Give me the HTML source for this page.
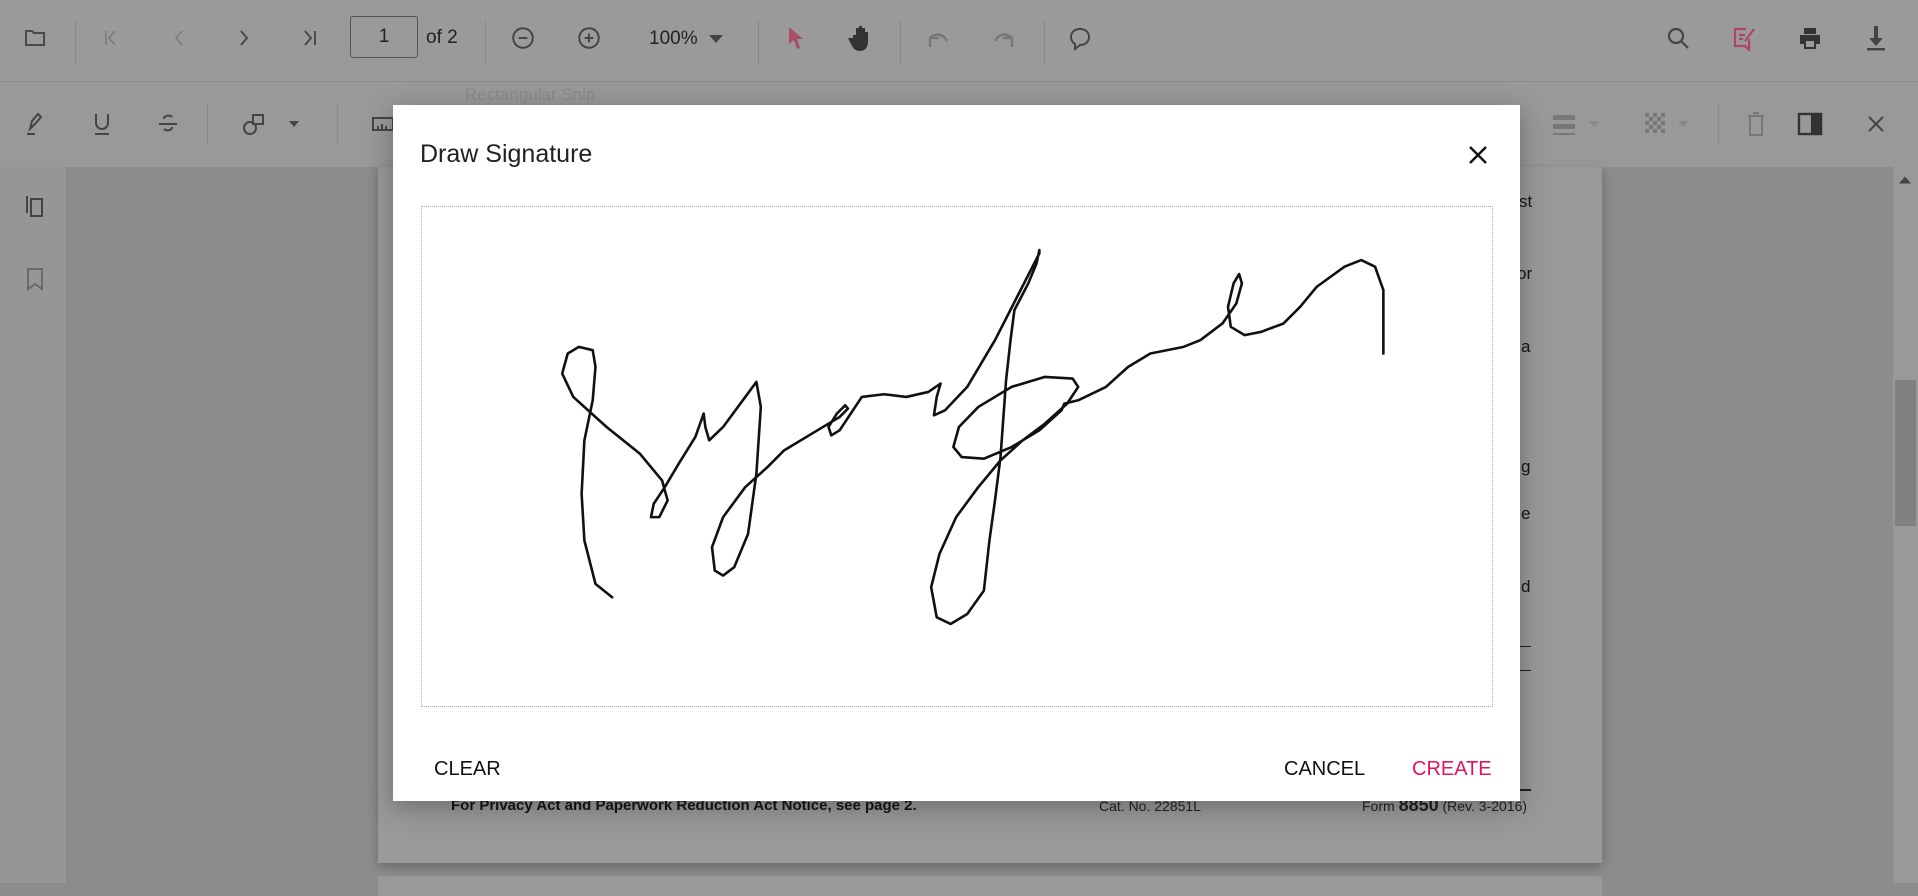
<!DOCTYPE html>
<html><head><meta charset="utf-8"><style>
*{margin:0;padding:0;box-sizing:border-box}
body{width:1918px;height:883px;overflow:hidden;background:#8c8c8c;font-family:"Liberation Sans",sans-serif;position:relative}
.a{position:absolute}
.tb1{left:0;top:0;width:1918px;height:82px;background:#9a9a9a;border-bottom:1px solid #8a8a8a}
.tb2{left:0;top:82px;width:1918px;height:85px;background:#999}
.side{left:0;top:167px;width:67px;height:716px;background:#969696;border-right:1px solid #8a8a8a}
.sep{width:1px;background:#888}
.ic{position:absolute;transform:translate(-50%,-50%)}
.pg{color:#151515;font-size:17px}
</style></head><body>
<div class="a tb1"></div>
<div class="a tb2"></div>
<div class="a side"></div>
<div class="a sep" style="left:75px;top:20px;height:44px"></div>
<div class="a sep" style="left:485px;top:20px;height:44px"></div>
<div class="a sep" style="left:758px;top:20px;height:44px"></div>
<div class="a sep" style="left:900px;top:20px;height:44px"></div>
<div class="a sep" style="left:1044px;top:20px;height:44px"></div>
<div class="a sep" style="left:207px;top:104px;height:40px"></div>
<div class="a sep" style="left:337px;top:104px;height:40px"></div>
<div class="a sep" style="left:1718px;top:104px;height:40px"></div>
<svg class="ic" style="left:35px;top:38px" width="24" height="24" viewBox="0 0 24 24" fill="none" stroke="#4a4a4a" stroke-width="2"><path d="M3 5h6l2 2h10v12H3z"/></svg>
<svg class="ic" style="left:111px;top:38px" width="24" height="24" viewBox="0 0 24 24" fill="none" stroke="#7a7a7a" stroke-width="1.6"><path d="M7 5v14M16 5l-6 7 6 7"/></svg>
<svg class="ic" style="left:179px;top:38px" width="24" height="24" viewBox="0 0 24 24" fill="none" stroke="#7a7a7a" stroke-width="1.6"><path d="M15 5l-6 7 6 7"/></svg>
<svg class="ic" style="left:244px;top:38px" width="24" height="24" viewBox="0 0 24 24" fill="none" stroke="#444" stroke-width="1.8"><path d="M9 5l6 7-6 7"/></svg>
<svg class="ic" style="left:310px;top:38px" width="24" height="24" viewBox="0 0 24 24" fill="none" stroke="#444" stroke-width="1.8"><path d="M7 5l6 7-6 7M17 5v14"/></svg>
<div class="a" style="left:350px;top:16px;width:68px;height:42px;border:1.5px solid #555;border-radius:3px;font-size:19px;color:#222;text-align:center;line-height:40px">1</div>
<div class="a" style="left:426px;top:27px;font-size:19px;color:#222">of 2</div>
<svg class="ic" style="left:523px;top:38px" width="26" height="26" viewBox="0 0 24 24" fill="none" stroke="#444" stroke-width="1.8"><circle cx="12" cy="12" r="9"/><path d="M8 12h8"/></svg>
<svg class="ic" style="left:589px;top:38px" width="26" height="26" viewBox="0 0 24 24" fill="none" stroke="#444" stroke-width="1.8"><circle cx="12" cy="12" r="9"/><path d="M8 12h8M12 8v8"/></svg>
<div class="a" style="left:649px;top:28px;font-size:19px;color:#222">100%</div>
<svg class="ic" style="left:716px;top:39px" width="16" height="10" viewBox="0 0 16 10"><path d="M1 1h14L8 9z" fill="#444"/></svg>
<svg class="ic" style="left:795px;top:38px" width="24" height="26" viewBox="0 0 24 26"><path d="M6 2l14 12h-6l3 9-3 1-3-9-5 4z" fill="#a64d68"/></svg>
<svg class="ic" style="left:861px;top:38px" width="26" height="28" viewBox="0 0 26 28"><path d="M5 14v-3h3v3-10h3v9V2h3v11V4h3v10-6h3v10c0 5-3 9-8 9s-7-3-9-7l-3-6 3 0z" fill="#333"/></svg>
<svg class="ic" style="left:938px;top:40px" width="26" height="22" viewBox="0 0 26 22" fill="none" stroke="#777" stroke-width="2.4"><path d="M5 18v-9h9M5 9c5-5 13-5 17 3"/></svg>
<svg class="ic" style="left:1004px;top:40px" width="26" height="22" viewBox="0 0 26 22" fill="none" stroke="#777" stroke-width="2.4"><path d="M21 18v-9h-9M21 9c-5-5-13-5-17 3"/></svg>
<svg class="ic" style="left:1080px;top:38px" width="26" height="26" viewBox="0 0 26 26" fill="none" stroke="#444" stroke-width="2"><path d="M13 4c5 0 9 3 9 8s-4 8-9 8l-5 4v-5c-3-2-4-4-4-7 0-5 4-8 9-8z"/></svg>
<svg class="ic" style="left:1678px;top:38px" width="26" height="26" viewBox="0 0 26 26" fill="none" stroke="#444" stroke-width="2.2"><circle cx="11" cy="11" r="7"/><path d="M16 16l7 7"/></svg>
<svg class="ic" style="left:1744px;top:38px" width="26" height="26" viewBox="0 0 26 26" fill="none" stroke="#b04468" stroke-width="2.2"><path d="M15 4H4v17h10l4 4V14M8 10h6M8 14h4M14 16l9-12"/></svg>
<svg class="ic" style="left:1810px;top:38px" width="26" height="26" viewBox="0 0 26 26"><path d="M7 3h12v6H7z M3 10h20v9h-4v5H7v-5H3z" fill="#333"/><rect x="9" y="16" width="8" height="6" fill="#9a9a9a"/></svg>
<svg class="ic" style="left:1876px;top:38px" width="26" height="28" viewBox="0 0 26 28"><path d="M11 2h4v12h5l-7 8-7-8h5z" fill="#444"/><rect x="4" y="24" width="18" height="2.4" fill="#444"/></svg>
<div class="a" style="left:465px;top:85px;font-size:17px;color:#8a8a8a">Rectangular Snip</div>
<svg class="ic" style="left:34px;top:124px" width="24" height="26" viewBox="0 0 24 26" fill="none" stroke="#444" stroke-width="2"><path d="M8 18l2-8 6-7 3 3-6 7zM5 23h8"/></svg>
<svg class="ic" style="left:102px;top:124px" width="22" height="26" viewBox="0 0 22 26" fill="none" stroke="#444" stroke-width="2"><path d="M5 3v9a6 6 0 0012 0V3M4 23h14"/></svg>
<svg class="ic" style="left:168px;top:124px" width="24" height="26" viewBox="0 0 24 26" fill="none" stroke="#444" stroke-width="2"><path d="M16 6c-2-2-8-2-8 2M3 13h18M16 16c0 4-6 4-8 2"/></svg>
<svg class="ic" style="left:254px;top:124px" width="26" height="26" viewBox="0 0 26 26" fill="none" stroke="#444" stroke-width="2"><circle cx="9" cy="17" r="6"/><rect x="12" y="4" width="10" height="9"/></svg>
<svg class="ic" style="left:294px;top:124px" width="12" height="8" viewBox="0 0 12 8"><path d="M1 1h10L6 7z" fill="#444"/></svg>
<svg class="ic" style="left:383px;top:124px" width="24" height="16" viewBox="0 0 24 16" fill="none" stroke="#444" stroke-width="2"><rect x="2" y="2" width="20" height="12"/><path d="M7 14v-4M11 14v-6M15 14v-4"/></svg>
<svg class="ic" style="left:1564px;top:124px" width="26" height="26" viewBox="0 0 26 26"><rect x="2" y="4" width="22" height="5" fill="#777"/><rect x="2" y="13" width="22" height="5" fill="#777"/><rect x="2" y="22" width="22" height="2" fill="#777"/></svg>
<svg class="ic" style="left:1594px;top:124px" width="10" height="6" viewBox="0 0 10 6"><path d="M0 0h10L5 6z" fill="#888"/></svg>
<svg class="ic" style="left:1656px;top:124px" width="22" height="22" viewBox="0 0 22 22" fill="#777"><path d="M0 0h4v4H0zM8 0h4v4H8zM16 0h4v4h-4zM4 4h4v4H4zM12 4h4v4h-4zM0 8h4v4H0zM8 8h4v4H8zM16 8h4v4h-4zM4 12h4v4H4zM12 12h4v4h-4zM0 16h4v4H0zM8 16h4v4H8zM16 16h4v4h-4z"/></svg>
<svg class="ic" style="left:1683px;top:124px" width="10" height="6" viewBox="0 0 10 6"><path d="M0 0h10L5 6z" fill="#888"/></svg>
<svg class="ic" style="left:1756px;top:124px" width="22" height="28" viewBox="0 0 22 28" fill="none" stroke="#777" stroke-width="2"><path d="M3 6h16M8 3h6M5 6v19h12V6"/></svg>
<svg class="ic" style="left:1810px;top:124px" width="26" height="24" viewBox="0 0 26 24"><rect x="2" y="2" width="22" height="20" fill="none" stroke="#333" stroke-width="2.4"/><rect x="14" y="2" width="10" height="20" fill="#333"/></svg>
<svg class="ic" style="left:1876px;top:124px" width="20" height="20" viewBox="0 0 20 20" stroke="#444" stroke-width="2"><path d="M3 3l14 14M17 3L3 17"/></svg>
<svg class="ic" style="left:35px;top:207px" width="24" height="26" viewBox="0 0 24 26" fill="none" stroke="#444" stroke-width="2"><path d="M8 5h11v17H8zM4 2v17"/></svg>
<svg class="ic" style="left:35px;top:279px" width="20" height="24" viewBox="0 0 20 24" fill="none" stroke="#6a6a6a" stroke-width="2"><path d="M3 2h14v20l-7-5-7 5z"/></svg>
<div class="a" style="left:378px;top:167px;width:1224px;height:696px;background:#999;box-shadow:0 4px 10px rgba(0,0,0,.25)"></div>
<div class="a" style="left:378px;top:876px;width:1224px;height:20px;background:#999"></div>
<div class="a pg" style="left:1519px;top:192px">st</div>
<div class="a pg" style="left:1517px;top:264px">or</div>
<div class="a pg" style="left:1521px;top:337px">a</div>
<div class="a pg" style="left:1521px;top:457px">g</div>
<div class="a pg" style="left:1521px;top:504px">e</div>
<div class="a pg" style="left:1521px;top:577px">d</div>
<div class="a" style="left:1500px;top:646px;width:31px;height:1px;background:#222"></div>
<div class="a" style="left:1500px;top:670px;width:31px;height:1px;background:#222"></div>
<div class="a" style="left:1500px;top:789px;width:31px;height:2px;background:#222"></div>
<div class="a" style="left:451px;top:797px;font-size:15px;font-weight:bold;color:#151515">For Privacy Act and Paperwork Reduction Act Notice, see page 2.</div>
<div class="a" style="left:1099px;top:798px;font-size:14px;color:#222">Cat. No. 22851L</div>
<div class="a" style="left:1362px;top:795px;font-size:14px;color:#222">Form <b style="font-size:18px">8850</b> (Rev. 3-2016)</div>
<div class="a" style="left:1893px;top:167px;width:25px;height:716px;background:#999"></div>
<div class="a" style="left:1895px;top:380px;width:21px;height:146px;background:#808080"></div>
<svg class="ic" style="left:1905px;top:180px" width="12" height="7" viewBox="0 0 12 7"><path d="M0 7h12L6 0z" fill="#444"/></svg>
<div class="a" style="left:393px;top:105px;width:1127px;height:696px;background:#fff;box-shadow:0 6px 24px rgba(0,0,0,.3)"></div>
<div class="a" style="left:420px;top:140px;font-size:25px;color:#222">Draw Signature</div>
<svg class="ic" style="left:1478px;top:155px" width="20" height="20" viewBox="0 0 20 20" stroke="#111" stroke-width="2.4"><path d="M2 2l16 16M18 2L2 18"/></svg>
<div class="a" style="left:421px;top:206px;width:1072px;height:501px;border:1.5px dotted #aaa"></div>
<svg class="a" style="left:540px;top:240px" width="870" height="400" viewBox="0 0 1568 1198" preserveAspectRatio="none" fill="none" stroke="#111" stroke-width="2.6" stroke-linejoin="round" stroke-linecap="round">
<polyline vector-effect="non-scaling-stroke" points="130,1070 100,1030 80,900 75,760 80,600 95,480 100,380 95,330 70,320 50,340 40,400 60,470 120,560 180,640 220,720 230,780 215,830 200,830 205,790 225,740 250,670 280,590 295,520 298,560 305,600 330,560 370,470 390,425 398,500 390,700 375,880 350,980 330,1005 315,990 310,920 330,830 370,740 410,680 440,630 500,570 540,530 555,505 550,495 535,520 520,560 525,585 540,570 560,520 580,470 620,462 660,470 700,455 722,430 715,470 710,525 730,510 770,440 820,300 860,170 900,40 900,30 895,70 880,130 855,210 848,300 840,420 830,650 820,780 810,900 800,1050 770,1120 740,1150 715,1130 705,1040 720,940 750,830 790,740 830,660 870,600 910,550 950,490 970,440 960,415 910,410 850,440 790,500 755,560 745,620 760,650 800,655 850,620 900,570 940,510 945,490 970,480 1020,440 1060,380 1100,340 1160,320 1190,300 1230,250 1255,190 1265,130 1260,102 1250,130 1240,200 1245,260 1270,285 1300,275 1340,250 1370,200 1400,140 1450,80 1480,60 1505,80 1520,150 1520,340"/>
</svg>
<div class="a" style="left:434px;top:758px;font-size:20px;color:#111">CLEAR</div>
<div class="a" style="left:1284px;top:758px;font-size:20px;color:#111">CANCEL</div>
<div class="a" style="left:1412px;top:758px;font-size:20px;color:#e3165b">CREATE</div>
</body></html>
